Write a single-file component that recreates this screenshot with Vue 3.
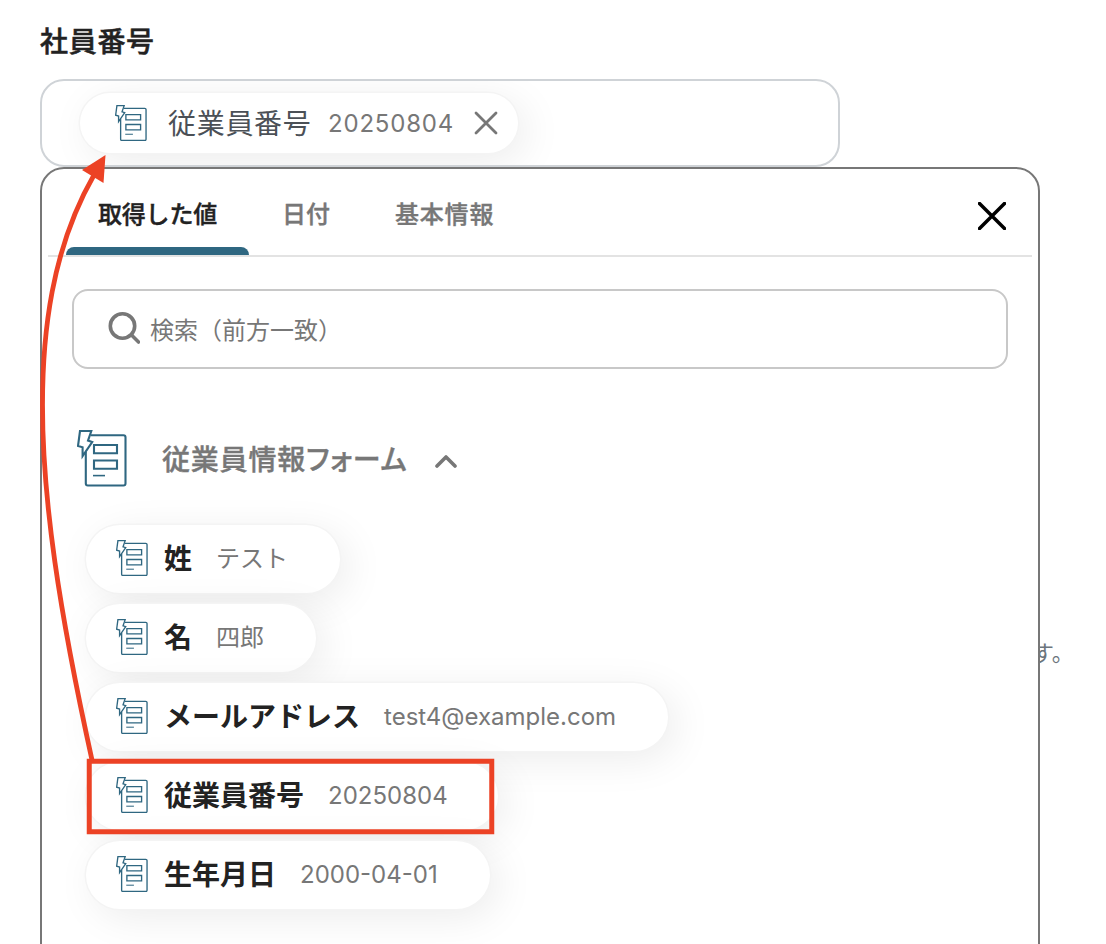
<script setup>
import { h } from 'vue'

const FormIcon = () =>
  h('svg', { viewBox: '0 0 50 57', fill: 'none', stroke: '#2f6781', 'stroke-width': 2.1, 'stroke-linejoin': 'round' }, [
    h('path', { d: 'M14 5.2H46.5Q48.5 5.2 48.5 7.2V53.5Q48.5 55.5 46.5 55.5H10.8Q8.8 55.5 8.8 53.5V22' }),
    h('path', { d: 'M3 1H14.3L11 10.6L15.2 12L5.6 26V17.2L1 16Z', 'stroke-linejoin': 'miter' }),
    h('path', { d: 'M17 15H40V23.3H17ZM17 30.5H40V38.8H17Z', 'stroke-linejoin': 'miter' }),
    h('path', { d: 'M16 45.6H28', 'stroke-width': 1.6 })
  ])

const tabs = [
  { label: '取得した値', cls: 'tab-values' },
  { label: '日付', cls: 'tab-date' },
  { label: '基本情報', cls: 'tab-basic' }
]

const items = [
  { label: '姓', value: 'テスト', width: 254, cls: 'cjk' },
  { label: '名', value: '四郎', width: 230, cls: 'cjk' },
  { label: 'メールアドレス', value: 'test4@example.com', width: 582, cls: '' },
  { label: '従業員番号', value: '20250804', width: 412, cls: '' },
  { label: '生年月日', value: '2000-04-01', width: 404, cls: '' }
]
</script>

<template>
  <main class="page">
    <h2 class="title">社員番号</h2>
    <div class="field">
      <div class="token">
        <FormIcon class="icon-sm" />
        <span class="token-label">従業員番号</span>
        <span class="token-value">20250804</span>
        <svg class="token-x" viewBox="0 0 24 24"><path d="M2 2L22 22M22 2L2 22" /></svg>
      </div>
    </div>
    <p class="behind">す。</p>
    <section class="panel">
      <header class="tabs">
        <div v-for="(t, i) in tabs" :key="t.label" class="tab" :class="[t.cls, { active: i === 0 }]"><span>{{ t.label }}</span></div>
        <svg class="close" viewBox="0 0 28 28"><path d="M1.5 1.5L26.5 26.5M26.5 1.5L1.5 26.5" /></svg>
      </header>
      <div class="search">
        <svg class="glass" viewBox="0 0 32 32"><circle cx="14.5" cy="14" r="12.2" /><path d="M23.5 23L30.5 30" /></svg>
        <span>検索（前方一致）</span>
      </div>
      <div class="group">
        <FormIcon class="icon-lg" />
        <span class="group-name">従業員情報フォーム</span>
        <svg class="chevron" viewBox="0 0 22 14"><path d="M2 12L11 3L20 12" /></svg>
      </div>
      <ul class="list">
        <li v-for="it in items" :key="it.label" class="chip" :class="it.cls" :style="{ width: it.width + 'px' }">
          <FormIcon class="icon-sm" />
          <b>{{ it.label }}</b>
          <span>{{ it.value }}</span>
        </li>
      </ul>
    </section>
    <svg class="marks" viewBox="0 0 1106 944">
      <rect x="89.250" y="761.250" width="402.500" height="70.500" />
      <path class="curve" d="M92 760C59 610 42.500 500 42.500 405C42.500 335 51 250 94 175" />
      <path class="head" d="M105.500 155L82 170L103.500 183Z" />
    </svg>
  </main>
</template>

<style>
body { background: #fff; overflow: hidden; }
</style>

<style scoped>
.page { position: relative; box-sizing: border-box; width: 1106px; height: 944px; padding: 0 40px; overflow: hidden; background: #fff; font-family: Inter, "Noto Sans CJK JP", sans-serif; color: #222; }
.title { margin: 0; height: 79px; padding-top: 22px; box-sizing: border-box; font-size: 28px; line-height: 40px; font-weight: 500; -webkit-text-stroke: 0.5px #222; letter-spacing: 0.7px; }
.field { box-sizing: border-box; width: 800px; height: 88px; border: 2px solid #cfd3d7; border-radius: 24px; padding: 12px 0 0 38px; overflow: hidden; }
.token { box-sizing: border-box; display: flex; align-items: center; width: 438px; height: 60px; border-radius: 30px; padding-left: 35px; background: #fff; box-shadow: 0 0 0 1.500px #f4f4f4, 8px 8px 40px rgba(0, 0, 0, 0.08); white-space: nowrap; }
.icon-sm { width: 32px; height: 36.500px; flex: none; }
.token-label { width: 160px; margin: -3px 0 0 21px; font-size: 28px; letter-spacing: 0.7px; color: #4b5056; }
.token-value { width: 146px; font-size: 24px; letter-spacing: 0.8px; color: #777; }
.token-x { width: 24px; height: 24px; }
.token-x path { fill: none; stroke: #777; stroke-width: 2.800; stroke-linecap: round; }
.behind { position: absolute; left: 1032px; top: 637px; margin: 0; font-size: 22px; line-height: 32px; color: #6c757d; }
.panel { position: relative; box-sizing: border-box; width: 1000px; height: 800px; border: 2px solid #777; border-radius: 24px; background: #fff; padding: 0 6px; }
.tabs { display: flex; height: 86px; border-bottom: 2px solid #e3e3e3; padding-left: 18px; }
.tab { position: relative; box-sizing: border-box; height: 86px; padding: 29px 32px 0; font-size: 24px; line-height: 34px; font-weight: 500; -webkit-text-stroke: 0.4px currentColor; color: #777; white-space: nowrap; }
.tab-values { width: 183px; letter-spacing: -0.2px; }
.tab-date { width: 114px; padding-left: 33px; }
.tab-basic { letter-spacing: 0.8px; }
.tab.active { color: #222; }
.tab.active::after { content: ""; position: absolute; left: 0; right: 0; bottom: 0; height: 8px; border-radius: 8px 8px 0 0; background: #2f6781; }
.close { width: 28px; height: 28px; margin: 33px 26px 0 auto; }
.close path { fill: none; stroke: #000; stroke-width: 3.500; stroke-linecap: round; }
.search { box-sizing: border-box; display: flex; align-items: center; margin: 32px 24px 0; height: 80px; border: 2px solid #c8c8c8; border-radius: 16px; padding-left: 34px; font-size: 24px; color: #777; }
.search span { margin-top: -2px; }
.glass { width: 32px; height: 32px; margin-right: 10px; margin-top: -2px; }
.glass * { fill: none; stroke: #777; stroke-width: 3.600; stroke-linecap: round; }
.group { display: flex; align-items: center; height: 57px; margin: 61px 0 0 29px; white-space: nowrap; }
.icon-lg { width: 50px; height: 57px; }
.group-name { width: 273px; margin: -2px 0 0 35px; font-size: 28px; font-weight: 500; -webkit-text-stroke: 0.4px #777; letter-spacing: 0.8px; color: #777; font-feature-settings: "palt"; }
.chevron { width: 22px; height: 14px; margin-top: 4px; }
.chevron path { fill: none; stroke: #777; stroke-width: 3.600; stroke-linecap: round; stroke-linejoin: round; }
.list { display: flex; flex-direction: column; gap: 11px; margin: 38px 0 0 38px; padding: 0; list-style: none; }
.chip { box-sizing: border-box; display: flex; align-items: center; height: 68px; border-radius: 34px; padding-left: 30px; background: #fff; box-shadow: 0 0 0 1.500px #f4f4f4, 8px 8px 40px rgba(0, 0, 0, 0.08); white-space: nowrap; }
.chip .icon-sm { margin-top: -2px; }
.chip b { margin: -4px 0 0 16px; font-size: 28px; font-weight: 600; }
.chip span { margin: -2px 0 0 24px; font-size: 24px; color: #777; }
.chip.cjk span { margin-top: -5px; }
.marks { position: absolute; left: 0; top: 0; width: 1106px; height: 944px; pointer-events: none; }
.marks rect { fill: none; stroke: #ec4225; stroke-width: 5; }
.marks .curve { fill: none; stroke: #ec4225; stroke-width: 4.800; }
.marks .head { fill: #ec4225; }
</style>
